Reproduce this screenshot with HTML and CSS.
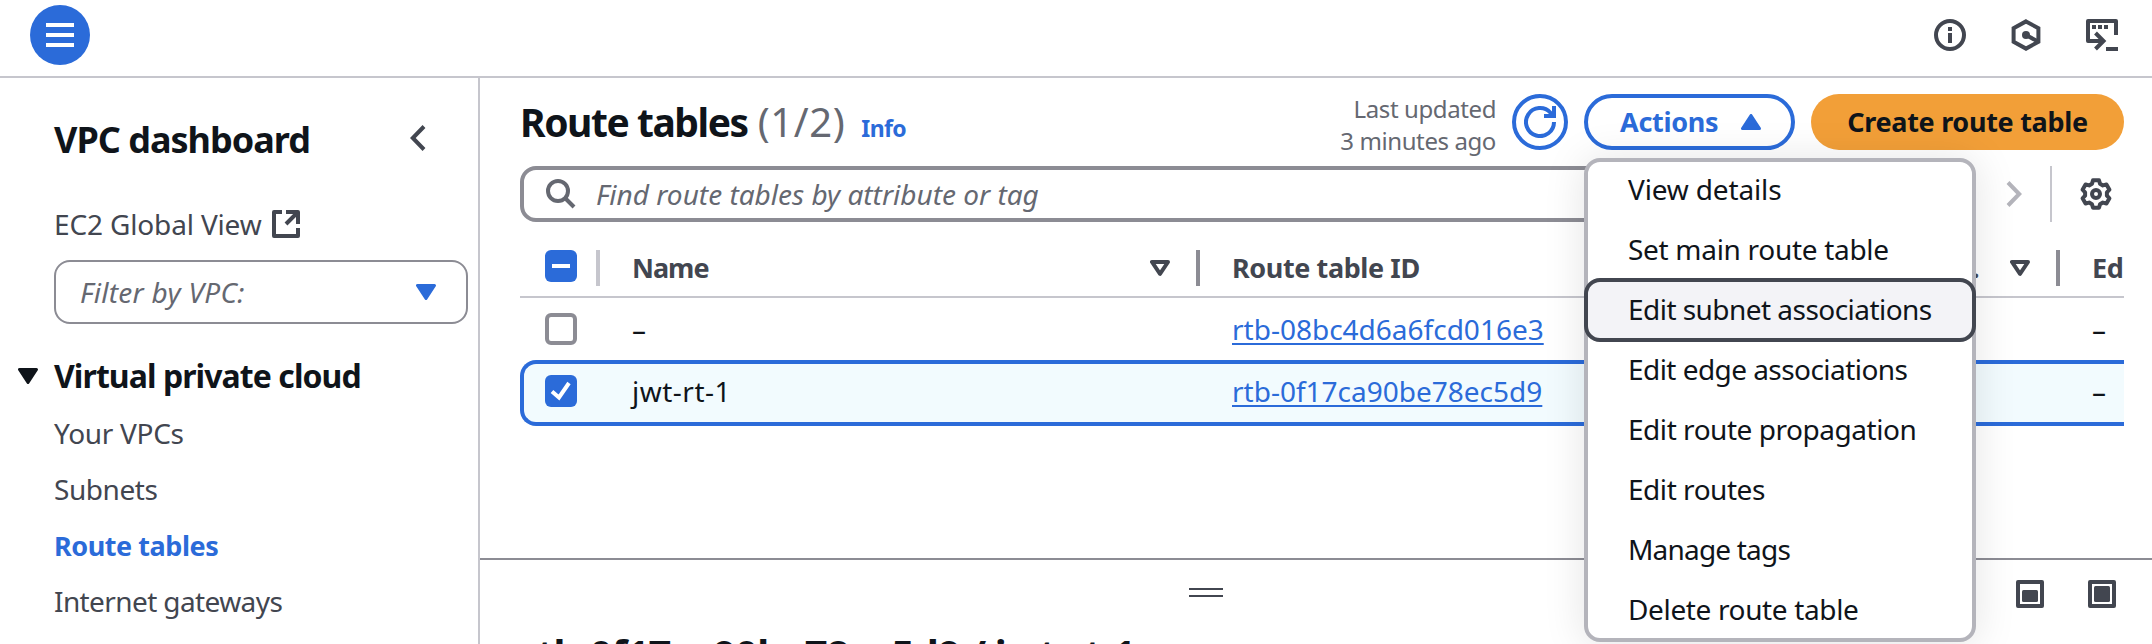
FILE: index.html
```html
<!DOCTYPE html>
<html lang="en">
<head>
<meta charset="utf-8">
<title>Route tables | VPC</title>
<link rel="stylesheet" href="styles.css">
</head>
<body>
<header class="topbar">
  <button class="menu-btn" aria-label="Menu"><svg width="60" height="60" viewBox="0 0 60 60"><path d="M16 20h28M16 30h28M16 40h28" stroke="#fff" stroke-width="4"/></svg></button>
  <div class="top-icons">
    <svg width="32" height="32" viewBox="0 0 32 32"><circle cx="16" cy="16" r="14" class="stroke"/><path d="M16 8v4M16 14v10" class="stroke"/></svg>
    <svg width="32" height="32" viewBox="0 0 32 32"><path d="M16 2.400L28.400 9.200V22.800L16 29.600L3.600 22.800V9.200Z" class="stroke"/><circle cx="16" cy="16" r="4" class="solid"/><path d="M16 16l11 6" class="stroke"/></svg>
    <svg width="32" height="32" viewBox="0 0 32 32"><path d="M30 16V2H2V22H17" class="stroke" stroke-linejoin="round"/><path d="M9.500 14l8 8-8 8" class="stroke"/><path d="M6 8h4M12 8h4M18 8h4M20 30h12" class="stroke"/></svg>
  </div>
</header>
<div class="shell">
  <nav class="sidebar">
    <div class="side-head"><h2 class="side-title">VPC dashboard</h2><svg class="collapse" width="16" height="26" viewBox="0 0 16 26"><path d="M14 1.500L2.800 13L14 24.500" class="stroke"/></svg></div>
    <a class="global"><span>EC2 Global View</span><svg width="28" height="28" viewBox="0 0 28 28"><path d="M10 2H2V26H26V18" class="stroke" stroke-linejoin="round"/><path d="M14 2H26V14M25.500 2.500L14 14" class="stroke" stroke-linejoin="round"/></svg></a>
    <div class="select"><span>Filter by VPC:</span><svg width="20" height="16" viewBox="0 0 20 16"><path d="M1.500 1.500H18.500L10 14.500Z" class="blue-tri"/></svg></div>
    <h3 class="section"><svg width="20" height="16" viewBox="0 0 20 16"><path d="M1.500 1.500H18.500L10 14.500Z" class="black-tri"/></svg><span>Virtual private cloud</span></h3>
    <ul class="links">
      <li class="vpcs">Your VPCs</li>
      <li class="subnets">Subnets</li>
      <li class="current">Route tables</li>
      <li class="gateways">Internet gateways</li>
    </ul>
  </nav>
  <main class="main">
    <section class="list">
      <div class="list-head">
        <h1 class="title">Route tables</h1>
        <span class="count">(1/2)</span>
        <a class="info">Info</a>
        <div class="updated">Last updated<br>3 minutes ago</div>
        <button class="refresh" aria-label="Refresh"><svg width="32" height="32" viewBox="0 0 32 32"><path d="M30 16A14 14 0 1 1 26.500 6.800L29 10" class="bstroke"/><path d="M20 10H30V0" class="bstroke"/></svg></button>
        <div class="actions-wrap">
          <button class="actions"><span>Actions</span><svg width="20" height="16" viewBox="0 0 20 16"><path d="M1.500 14.500H18.500L10 1.500Z" class="blue-tri"/></svg></button>
          <ul class="menu">
            <li class="m1">View details</li>
            <li class="m2">Set main route table</li>
            <li class="m3 active">Edit subnet associations</li>
            <li class="m4">Edit edge associations</li>
            <li class="m5">Edit route propagation</li>
            <li class="m6">Edit routes</li>
            <li class="m7">Manage tags</li>
            <li class="m8">Delete route table</li>
          </ul>
        </div>
        <button class="create">Create route table</button>
      </div>
      <div class="tools">
        <div class="search"><svg width="30" height="30" viewBox="0 0 30 30"><circle cx="12" cy="12" r="10" class="gstroke"/><path d="M19 19l9 9" class="gstroke"/></svg><span>Find route tables by attribute or tag</span></div>
        <svg class="next" width="16" height="26" viewBox="0 0 16 26"><path d="M2 1.500L13.200 13L2 24.500" fill="none" stroke="#b4b4bb" stroke-width="4"/></svg>
        <div class="rule"></div>
        <svg class="gear" width="32" height="32" viewBox="0 0 32 32"><path d="M13 2.200L19 2.200L20 5.700L22.900 7.400L26.450 6.500L29.450 11.700L26.900 14.300L26.900 17.700L29.450 20.300L26.450 25.500L22.900 24.600L20 26.300L19 29.800L13 29.800L12 26.300L9.100 24.600L5.550 25.500L2.550 20.300L5.100 17.700L5.100 14.300L2.550 11.700L5.550 6.500L9.100 7.400L12 5.700Z" class="stroke" stroke-linejoin="round"/><circle cx="16" cy="16" r="4" class="stroke"/></svg>
      </div>
      <div class="table">
        <div class="row head">
          <div class="check"><span class="box on"><svg width="32" height="32" viewBox="0 0 32 32"><path d="M7 16h18" stroke="#fff" stroke-width="4"/></svg></span><i class="bar light"></i></div>
          <div class="name"><span class="h-name">Name</span><svg width="20" height="16" viewBox="0 0 20 16"><path d="M2 2H18L10 13.800Z" class="stroke" stroke-linejoin="round"/></svg><i class="bar"></i></div>
          <div class="rid"><span class="h-rid">Route table ID</span></div>
          <div class="assoc"><span>.</span><svg width="20" height="16" viewBox="0 0 20 16"><path d="M2 2H18L10 13.800Z" class="stroke" stroke-linejoin="round"/></svg><i class="bar"></i></div>
          <div class="edge"><span>Ed</span></div>
        </div>
        <div class="row body">
          <div class="check"><span class="box"></span></div>
          <div class="name">–</div>
          <div class="rid"><a>rtb-08bc4d6a6fcd016e3</a></div>
          <div class="assoc"></div>
          <div class="edge">–</div>
        </div>
        <div class="row body selected">
          <div class="check"><span class="box on"><svg width="32" height="32" viewBox="0 0 32 32"><path d="M7 16.500l7 6L24 8" fill="none" stroke="#fff" stroke-width="4"/></svg></span></div>
          <div class="name">jwt-rt-1</div>
          <div class="rid"><a>rtb-0f17ca90be78ec5d9</a></div>
          <div class="assoc"></div>
          <div class="edge">–</div>
        </div>
      </div>
    </section>
    <section class="split">
      <div class="split-bar">
        <svg class="handle" width="34" height="9" viewBox="0 0 34 9"><path d="M0 1h34M0 8h34" stroke="#424650" stroke-width="2"/></svg>
        <svg class="pos" width="28" height="28" viewBox="0 0 28 28"><rect x="2" y="2" width="24" height="24" class="stroke" stroke-linejoin="round"/><rect x="6" y="10" width="16" height="12" rx="1.500" class="solid"/></svg>
        <svg class="pos" width="28" height="28" viewBox="0 0 28 28"><rect x="2" y="2" width="24" height="24" class="stroke" stroke-linejoin="round"/><rect x="6" y="6" width="16" height="16" rx="1.500" class="solid"/></svg>
      </div>
      <h2 class="detail">rtb-0f17ca90be78ec5d9 / jwt-rt-1</h2>
    </section>
  </main>
</div>
</body>
</html>
```
FILE: styles.css
```css
* { box-sizing: border-box; margin: 0; padding: 0; }
html, body { width: 2152px; height: 644px; overflow: hidden; }
body { font: 28px/40px "Noto Sans", sans-serif; color: #0f141a; background: #fff; white-space: nowrap; display: flex; flex-direction: column; }
button { font: inherit; border: 0; background: none; }
ul { list-style: none; }
svg { display: block; flex: none; }
.stroke { fill: none; stroke: #424650; stroke-width: 4; }
.bstroke { fill: none; stroke: #2b6bd9; stroke-width: 4; }
.gstroke { fill: none; stroke: #656871; stroke-width: 4; }
.solid { fill: #424650; }
.blue-tri { fill: #2b6bd9; stroke: #2b6bd9; stroke-width: 3; stroke-linejoin: round; }
.black-tri { fill: #0f141a; stroke: #0f141a; stroke-width: 3; stroke-linejoin: round; }

.topbar { flex: none; height: 78px; border-bottom: 2px solid #c6c6cd; display: flex; justify-content: space-between; align-items: flex-start; padding: 5px 34px 0 30px; }
.menu-btn { width: 60px; height: 60px; border-radius: 50%; background: #2b6bd9; }
.top-icons { display: flex; gap: 44px; padding-top: 14px; }

.shell { flex: 1; min-height: 0; display: flex; }
.sidebar { flex: none; width: 480px; border-right: 2px solid #c6c6cd; padding: 0 10px 0 54px; color: #424650; }
.side-head { display: flex; justify-content: space-between; padding: 42px 42px 0 0; height: 125px; }
.side-title { font-size: 36px; line-height: 40px; color: #0f141a; letter-spacing: -1px; }
.collapse { margin-top: 5px; }
.global { display: flex; align-items: center; gap: 10px; height: 40px; margin-top: 1px; letter-spacing: -0.15px; }
.select { margin-top: 16px; height: 64px; border: 2px solid #8c8c94; border-radius: 16px; padding: 0 30px 0 24px; display: flex; align-items: center; justify-content: space-between; font-style: italic; color: #656871; letter-spacing: 0.3px; }
.section { display: flex; align-items: center; gap: 16px; margin: 32px 0 0 -36px; height: 40px; font-size: 32px; color: #0f141a; letter-spacing: -0.93px; }
.links { padding-top: 16px; }
.links li { height: 56px; line-height: 42px; }
.vpcs { letter-spacing: -0.3px; }
.subnets { letter-spacing: -0.45px; }
.gateways { letter-spacing: -0.6px; }
.links .current { color: #2b6bd9; font-size: 27px; line-height: 44px; font-weight: 700; letter-spacing: -0.45px; }

.main { flex: 1; min-width: 0; display: flex; flex-direction: column; }
.list { height: 480px; padding: 16px 28px 0 40px; }
.list-head { display: flex; height: 56px; align-items: center; }
.title { font-size: 39px; line-height: 58px; letter-spacing: -1.45px; }
.count { font-size: 40px; line-height: 58px; color: #656871; letter-spacing: 0.6px; margin-left: 10px; }
.info { font-size: 23px; font-weight: 700; color: #2b6bd9; margin-left: 16px; padding-top: 12px; letter-spacing: -0.6px; }
.updated { margin-left: auto; font-size: 24px; line-height: 32px; color: #656871; text-align: right; padding-top: 6px; letter-spacing: -0.4px; }
.refresh { width: 56px; height: 56px; margin-left: 16px; border: 4px solid #2b6bd9; border-radius: 50%; padding: 8px; }
.actions-wrap { position: relative; margin-left: 16px; }
.actions { width: 211px; height: 56px; border: 4px solid #2b6bd9; border-radius: 28px; color: #2b6bd9; font-size: 27px; font-weight: 700; letter-spacing: -0.3px; display: flex; align-items: center; justify-content: space-between; padding: 0 30px 0 32px; }
.create { width: 313px; height: 56px; margin-left: 16px; border-radius: 28px; background: #f29f38; color: #0f141a; font-size: 27px; font-weight: 700; letter-spacing: -0.3px; }
.menu { position: absolute; left: 0; top: 64px; width: 392px; height: 484px; border: 4px solid #b4b4bb; border-radius: 16px; background: #fff; box-shadow: 0 2px 40px 2px rgba(0, 7, 22, .1); z-index: 2; }
.menu li { height: 60px; line-height: 54px; padding-left: 40px; }
.menu .active { margin: -4px -4px 0; height: 64px; border: 4px solid #424650; border-radius: 16px; background: #f3f3f7; }
.m1 { letter-spacing: -0.15px; }
.m2 { letter-spacing: -0.3px; }
.m3 { letter-spacing: -0.54px; }
.m4 { letter-spacing: -0.55px; }
.m5, .m6 { letter-spacing: -0.46px; }
.m7 { letter-spacing: -0.8px; }
.m8 { letter-spacing: -0.36px; }

.tools { display: flex; align-items: center; height: 56px; margin-top: 16px; padding-right: 12px; }
.search { width: 1300px; height: 56px; border: 4px solid #8c8c94; border-radius: 16px; display: flex; align-items: center; gap: 20px; padding-left: 22px; font-style: italic; color: #656871; }
.next { margin-left: auto; margin-right: 28px; }
.rule { width: 2px; height: 56px; background: #c6c6cd; margin-right: 28px; }

.table { margin-top: 16px; overflow: hidden; }
.row { display: grid; grid-template-columns: 80px 600px 700px 160px 64px; }
.row > div { display: flex; align-items: center; overflow: hidden; }
.head { height: 60px; border-bottom: 2px solid #c6c6cd; color: #424650; font-size: 27px; font-weight: 700; letter-spacing: -0.4px; padding-top: 2px; }
.head .box { margin-bottom: 4px; }
.h-name { letter-spacing: -1px; }
.body { height: 62px; }
.check { padding-left: 25px; }
.box { width: 32px; height: 32px; border: 4px solid #8c8c94; border-radius: 6px; flex: none; }
.box.on { border: 0; background: #2b6bd9; }
.bar { width: 4px; height: 36px; background: #8c8c94; flex: none; }
.light { background: #c6c6cd; margin-left: 19px; }
.name { padding-left: 32px; }
.name svg { margin-left: auto; }
.name svg + .bar, .assoc svg + .bar { margin-left: 26px; }
.rid { padding-left: 32px; }
.rid a { color: #2b6bd9; text-decoration: underline; text-decoration-thickness: 2px; text-underline-offset: 3px; }
.assoc span { padding-left: 72px; }
.assoc svg { margin-left: auto; }
.edge { padding-left: 32px; }
.selected { grid-template-columns: 76px 600px 700px 160px 64px; height: 66px; border: 4px solid #2b6bd9; border-right: 0; border-radius: 16px 0 0 16px; background: #f2fbfe; padding-bottom: 4px; }
.selected .check { padding-left: 21px; }
.selected .name { letter-spacing: 0.5px; }

.split { flex: 1; border-top: 2px solid #8c8c94; padding-left: 40px; overflow: hidden; }
.split-bar { display: flex; padding: 20px 36px 0 669px; height: 66px; gap: 44px; }
.handle { margin: 8px auto 0 0; }
.detail { font-size: 40px; line-height: 56px; letter-spacing: -0.87px; }
```
